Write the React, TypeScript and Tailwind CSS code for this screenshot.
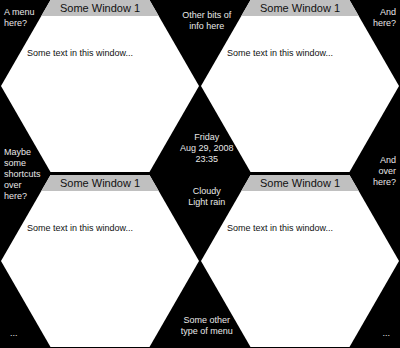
const hex = "polygon(25% 0, 75% 0, 100% 50%, 75% 100%, 25% 100%, 0 50%)";

const HexWindow = ({ title }: { title: string }) => (
  <div
    className="w-[198px] h-[172px] bg-white flex flex-col"
    style={{ clipPath: hex }}
  >
    <div className="h-[16px] bg-[#c0c0c0] flex items-center justify-center text-[11px] leading-none text-[#111]">
      {title}
    </div>
    <p className="mt-[33px] pl-[26px] text-[9px] leading-none text-[#111]">
      Some text in this window...
    </p>
  </div>
);

const Label = ({ lines, align = "left" }: { lines: string[]; align?: string }) => (
  <div
    className={
      "text-[9px] leading-[11px] text-[#e8e8e8] " +
      (align === "center" ? "text-center" : align === "right" ? "text-right" : "text-left")
    }
  >
    {lines.map((l) => (
      <div key={l}>{l}</div>
    ))}
  </div>
);

export default function App() {
  return (
    <main
      className="relative w-[400px] h-[348px] bg-black overflow-hidden"
      style={{ fontFamily: '"Liberation Sans", Arial, sans-serif' }}
    >
      <div className="grid grid-cols-[198px_198px] gap-x-[2px] gap-y-[3px] pl-[1px]">
        <HexWindow title="Some Window 1" />
        <HexWindow title="Some Window 1" />
        <HexWindow title="Some Window 1" />
        <HexWindow title="Some Window 1" />
      </div>

      {/* labels in the black gaps */}
      <div className="absolute inset-0 flex justify-between px-[4px]">
        <div className="flex flex-col pt-[7px] pb-[9px]">
          <Label lines={["A menu", "here?"]} />
          <div className="mt-[118px]">
            <Label lines={["Maybe", "some", "shortcuts", "over", "here?"]} />
          </div>
          <div className="mt-auto pl-[6px]">
            <Label lines={["..."]} />
          </div>
        </div>
        <div className="flex flex-col items-center pt-[10px] pb-[11px]">
          <Label lines={["Other bits of", "info here"]} align="center" />
          <div className="mt-[100px]">
            <Label lines={["Friday", "Aug 29, 2008", "23:35"]} align="center" />
          </div>
          <div className="mt-[21px]">
            <Label lines={["Cloudy", "Light rain"]} align="center" />
          </div>
          <div className="mt-auto">
            <Label lines={["Some other", "type of menu"]} align="center" />
          </div>
        </div>
        <div className="flex flex-col items-end pt-[7px] pb-[9px]">
          <Label lines={["And", "here?"]} align="right" />
          <div className="mt-[126px]">
            <Label lines={["And", "over", "here?"]} align="right" />
          </div>
          <div className="mt-auto pr-[6px]">
            <Label lines={["..."]} align="right" />
          </div>
        </div>
      </div>
    </main>
  );
}
